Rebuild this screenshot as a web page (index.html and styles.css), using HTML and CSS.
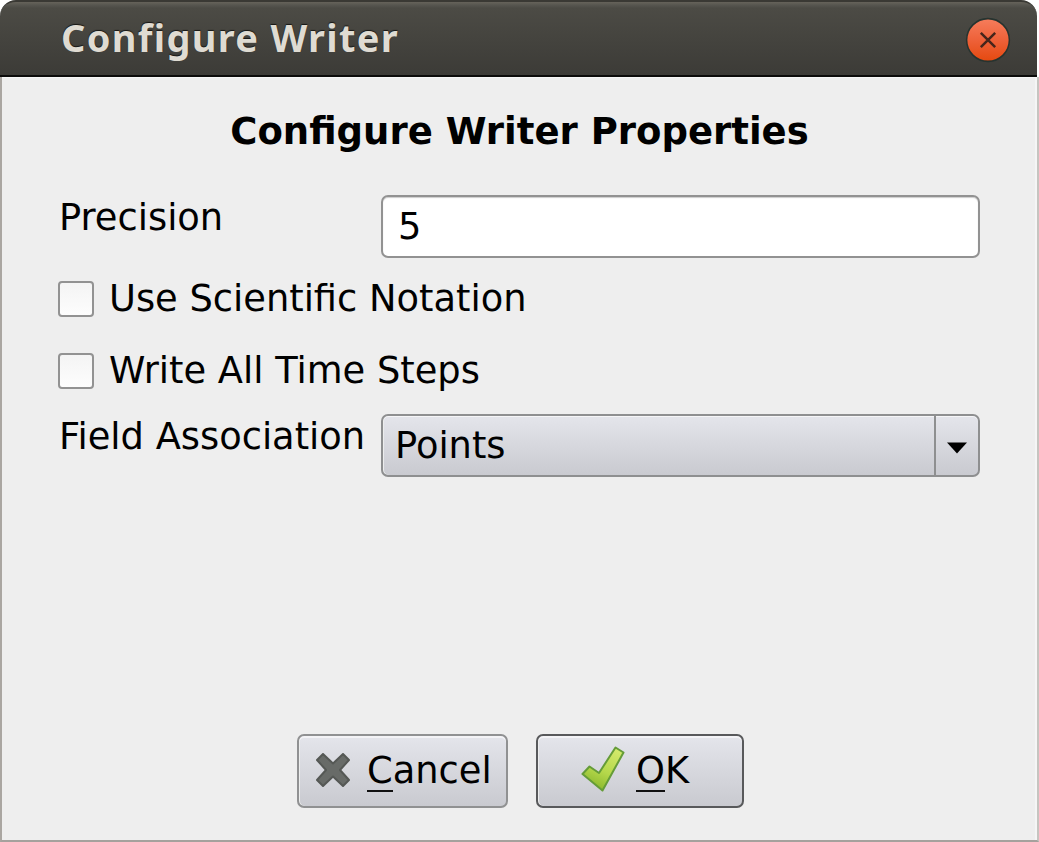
FILE: index.html
```html
<!DOCTYPE html>
<html lang="en">
<head>
<meta charset="utf-8">
<title>Configure Writer</title>
<link rel="stylesheet" href="styles.css">
</head>
<body>
<div class="dialog">
  <header class="titlebar">
    <span class="title">Configure Writer</span>
    <span class="close-slot">
      <svg class="close" viewBox="0 0 48 48">
        <defs><linearGradient id="red" x1="0" y1="0" x2="0" y2="1"><stop offset="0" stop-color="#f67d5c"/><stop offset=".5" stop-color="#ee6139"/><stop offset="1" stop-color="#e4490f"/></linearGradient></defs>
        <circle cx="24" cy="24" r="22.3" fill="url(#red)" stroke="#26332f" stroke-width="1.6"/>
        <path d="M16.5 16.5L31.5 31.5M31.5 16.5L16.5 31.5" stroke="#45251b" stroke-width="2.6"/>
      </svg>
    </span>
  </header>
  <main class="content">
    <h1 class="heading">Configure Writer Properties</h1>
    <div class="row row-precision">
      <span class="label">Precision</span>
      <div class="input">5</div>
    </div>
    <div class="check"><span class="box"></span><span class="label">Use Scientific Notation</span></div>
    <div class="check"><span class="box"></span><span class="label">Write All Time Steps</span></div>
    <div class="row row-field">
      <span class="label">Field Association</span>
      <div class="combo">
        <span class="combo-value">Points</span>
        <span class="combo-arrow"><svg width="20" height="12" viewBox="0 0 20 12"><path d="M0 0.5H20L10 11.5Z" fill="#000"/></svg></span>
      </div>
    </div>
    <div class="buttons">
      <div class="button cancel">
        <svg class="icon-x" viewBox="0 0 34 34"><path d="M7 1L17 10.5L27 1L33 7L24 17L33 27L27 33L17 23.5L7 33L1 27L10 17L1 7Z" fill="#686b68" stroke="#555855" stroke-width="2" stroke-linejoin="round"/></svg>
        <span class="label"><span class="key">C</span>ancel</span>
      </div>
      <div class="button ok">
        <svg class="icon-ok" viewBox="0 0 44 46">
          <defs><linearGradient id="green" x1=".7" y1="0" x2=".3" y2="1"><stop offset="0" stop-color="#d3e96b"/><stop offset=".55" stop-color="#b5d84b"/><stop offset="1" stop-color="#86b52b"/></linearGradient></defs>
          <path d="M34.5 1.5L42.5 6.5L21.5 44.5L1.5 28L8.5 20.5L18 27Z" fill="url(#green)" stroke="#659c38" stroke-width="2" stroke-linejoin="round"/>
        </svg>
        <span class="label"><span class="key">O</span>K</span>
      </div>
    </div>
  </main>
</div>
</body>
</html>
```
FILE: styles.css
```css
* { box-sizing: border-box; }
body {
  margin: 0;
  background: #fff;
  font-family: "DejaVu Sans", sans-serif;
  font-size: 36.8px;
  line-height: 44px;
  color: #000;
}
.dialog {
  width: 1039px;
  height: 842px;
  display: flex;
  flex-direction: column;
  overflow: hidden;
}
.titlebar {
  width: 1037px;
  height: 77px;
  flex: none;
  display: flex;
  justify-content: space-between;
  padding: 13px 25px 0 61px;
  border-top: 2px solid #3a3934;
  border-bottom: 2px solid #0b0b0a;
  border-radius: 16px 16px 0 0;
  background: linear-gradient(#66635a 0, #575650 3px, #4c4b45 6px, #3c3b37 100%);
}
.title {
  font-family: "Noto Sans", sans-serif;
  font-weight: 700;
  font-size: 38px;
  letter-spacing: 1.3px;
  color: #dfdbd2;
  text-shadow: 0 -1px 1px #161614;
  white-space: nowrap;
}
.close-slot { width: 48px; height: 50px; padding-top: 2px; }
.close { display: block; width: 46px; height: 46px; margin-left: 1px; }
.content {
  flex: 1;
  display: flex;
  flex-direction: column;
  padding: 33px 57px 32px;
  background: #eee;
  border-left: 2px solid #aaa6a1;
  border-right: 2px solid #c6c4c0;
  border-bottom: 2px solid #a5a19d;
  box-shadow: inset 0 1px #f6f6f6, inset -2px 0 #f5f5f5;
}
.heading {
  margin: 0 0 41px;
  font-size: 37px;
  font-weight: 700;
  text-align: center;
}
.label { white-space: nowrap; }
.row {
  display: grid;
  grid-template-columns: 322px 599px;
  height: 63px;
}
.row .label { padding-top: 1px; }
.row-precision { margin-bottom: 18px; }
.row-field { margin-top: -6px; }
.input {
  height: 63px;
  padding: 8px 15px;
  border: 2px solid #929292;
  border-radius: 7px;
  background: #fff;
  box-shadow: inset 0 1px 1px #ccc;
}
.check {
  display: flex;
  gap: 15px;
  height: 44px;
  margin: 0 0 28px -1px;
}
.check .label { padding-top: 1px; }
.box {
  width: 36px;
  height: 36px;
  margin-top: 5px;
  border: 2px solid #929292;
  border-radius: 4px;
  background: linear-gradient(#f4f4f4, #fdfdfd);
}
.combo {
  display: flex;
  height: 63px;
  border: 2px solid #8e8f90;
  border-radius: 7px;
  background: linear-gradient(#e4e5eb, #c9cad0);
  box-shadow: inset 0 1px #f5f5f7, inset 1px 0 #eceded;
}
.combo-value { flex: 1; padding: 8px 0 0 12px; }
.combo-arrow {
  width: 44px;
  border-left: 2px solid #8e8f90;
  display: flex;
  justify-content: center;
  align-items: center;
  padding-top: 4px;
}
.buttons {
  display: flex;
  gap: 28px;
  margin: auto 0 0 238px;
}
.button {
  display: flex;
  height: 74px;
  padding-top: 12px;
  border: 2px solid #909192;
  border-radius: 7px;
  background: linear-gradient(#e4e5eb, #c9cad0);
  box-shadow: inset 0 2px #f3f3f6, inset 1px 0 #eceded;
}
.button .label { padding-top: 1px; }
.cancel { width: 211px; padding-left: 17px; }
.ok { width: 208px; padding-left: 43px; border-color: #58595b; }
.icon-x { width: 34px; height: 34px; margin: 5px 17px 0 0; }
.icon-ok { width: 44px; height: 46px; margin: -2px 11px 0 0; }
.key {
  display: inline-block;
  height: 43px;
  border-bottom: 2px solid #111;
}
```
